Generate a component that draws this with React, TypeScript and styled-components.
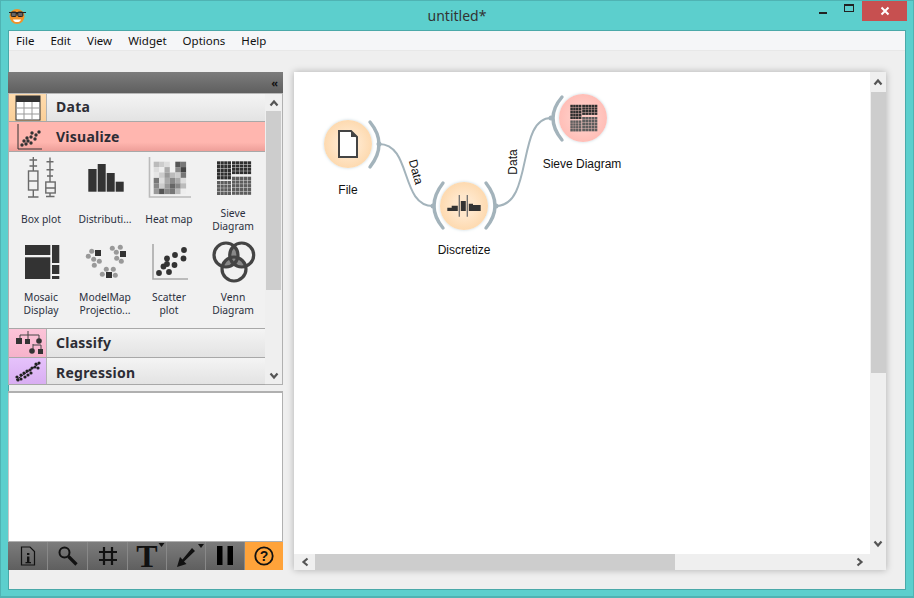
import React from 'react'
import styled, { createGlobalStyle } from 'styled-components'

const GlobalStyle = createGlobalStyle`
    html, body { margin: 0; padding: 0; background: #5ccfcd; }
    * { box-sizing: border-box; }
`

const Frame = styled.div`
    width: 914px;
    height: 598px;
    display: flex;
    flex-direction: column;
    background: #5ccfcd;
    border: 1px solid #4fb3b3;
    border-bottom-width: 2px;
    font-family: "Noto Sans", sans-serif;
    overflow: hidden;
`

const TitleBar = styled.div`
    height: 29px;
    flex: none;
    display: flex;
    align-items: flex-start;
    position: relative;
`

const Logo = styled.div`
    width: 18px;
    height: 18px;
    margin: 6px 0 0 7px;
`

const Title = styled.div`
    position: absolute;
    left: 0;
    right: 0;
    top: 5px;
    text-align: center;
    font-size: 14px;
    line-height: 20px;
    color: #333;
`

const WindowButtons = styled.div`
    margin-left: auto;
    margin-right: 6px;
    display: flex;
    align-items: flex-start;
`

const WinButton = styled.div<{ $width: number; $close?: boolean }>`
    width: ${p => p.$width}px;
    height: 20px;
    display: flex;
    align-items: center;
    justify-content: center;
    background: ${p => (p.$close ? '#c75050' : 'transparent')};
`

const Inner = styled.div`
    flex: 1;
    margin: 0 7px 6px 7px;
    border: 1px solid #4aa9a9;
    background: #efefef;
    display: flex;
    flex-direction: column;
    min-height: 0;
`

const MenuBar = styled.div`
    height: 20px;
    flex: none;
    display: flex;
    align-items: center;
    padding-left: 7px;
    gap: 16px;
    background: #f5f6f8;
    border-bottom: 1px solid #e8e8e8;
    font-size: 11.5px;
    color: #111;
`

const Body = styled.div`
    flex: 1;
    display: flex;
    gap: 11px;
    padding-top: 21px;
    padding-bottom: 19px;
    min-height: 0;
`

const Dock = styled.div`
    width: 275px;
    flex: none;
    display: flex;
    flex-direction: column;
    margin-left: -1px;
`

const DockHeader = styled.div`
    height: 21px;
    flex: none;
    display: flex;
    align-items: center;
    justify-content: flex-end;
    padding-right: 5px;
    background: linear-gradient(#7c7c7c, #5f5f5f);
    font-size: 11px;
    font-weight: 700;
    line-height: 1;
    color: #111;
`

const ToolBoxWrap = styled.div`
    height: 292px;
    flex: none;
    display: flex;
    background: #f1f1f1;
    border: 1px solid #b0b0b0;
    border-top: 1px solid #b8b8b8;
`

const ToolBox = styled.div`
    flex: 1;
    min-width: 0;
    display: flex;
    flex-direction: column;
`

const SideScroll = styled.div`
    width: 17px;
    flex: none;
    display: flex;
    flex-direction: column;
    align-items: center;
    background: #efefef;
`

const ArrowCell = styled.div<{ $h: number }>`
    height: ${p => p.$h}px;
    flex: none;
    display: flex;
    align-items: center;
    justify-content: center;
`

const Thumb = styled.div<{ $h: number }>`
    width: 15px;
    height: ${p => p.$h}px;
    flex: none;
    background: #cdcdcd;
`

const Spring = styled.div`
    flex: 1;
`

const Section = styled.div<{ $h: number; $bg?: string }>`
    height: ${p => p.$h}px;
    flex: none;
    display: flex;
    align-items: stretch;
    background: ${p => p.$bg || 'linear-gradient(#f4f4f4, #e3e3e3)'};
    border-bottom: 1px solid #a8a8a8;
`

const SectionTile = styled.div<{ $bg: string; $line?: boolean }>`
    width: 38px;
    flex: none;
    display: flex;
    align-items: center;
    justify-content: center;
    background: ${p => p.$bg};
    border-right: ${p => (p.$line ? '1px solid #b4b4b4' : '1px solid transparent')};
`

const SectionName = styled.div<{ $up?: number; $down?: number }>`
    padding-left: 9px;
    padding-bottom: ${p => p.$up || 0}px;
    padding-top: ${p => p.$down || 0}px;
    display: flex;
    align-items: center;
    font-size: 14px;
    font-weight: 700;
    color: #2d2d35;
    letter-spacing: 0.25px;
`

const WidgetGrid = styled.div`
    height: 177px;
    flex: none;
    display: grid;
    grid-template-columns: repeat(4, 64px);
    grid-auto-rows: 84px;
    padding-top: 2px;
    border-bottom: 1px solid #a8a8a8;
`

const Widget = styled.div`
    display: flex;
    flex-direction: column;
    align-items: center;
`

const WidgetIcon = styled.svg`
    width: 48px;
    height: 48px;
    flex: none;
    display: block;
`

const WidgetName = styled.div`
    height: 27px;
    margin-top: 4px;
    width: 50px;
    display: flex;
    align-items: center;
    justify-content: center;
    text-align: center;
    font-size: 10.3px;
    line-height: 13px;
    color: #2b3040;
`

const Splitter = styled.div`
    height: 8px;
    flex: none;
    border-bottom: 2px solid #b0b0b0;
`

const InfoPanel = styled.div`
    flex: 1;
    background: #fff;
    border: 1px solid #b0b0b0;
    border-top: none;
    border-left: 1px solid #c8c8c8;
`

const ToolBar = styled.div`
    height: 28px;
    flex: none;
    display: grid;
    grid-template-columns: 40px 40px 40px 39px 39px 39px 38px;
    background: linear-gradient(#7c7c7c, #5f5f5f);
`

const ToolButton = styled.div<{ $active?: boolean }>`
    display: flex;
    align-items: center;
    justify-content: center;
    border-right: 1px solid #888;
    background: ${p => (p.$active ? '#ffa33a' : 'transparent')};
    &:last-child { border-right: none; }
`

const CanvasPanel = styled.div`
    width: 592px;
    flex: none;
    display: grid;
    grid-template-columns: 1fr 16px;
    grid-template-rows: 1fr 16px;
    background: #efefef;
    box-shadow: 0 0 7px rgba(0, 0, 0, 0.28);
`

const Canvas = styled.div`
    position: relative;
    background: #fff;
    overflow: hidden;
`

const VScroll = styled.div`
    display: flex;
    flex-direction: column;
    align-items: center;
`

const HScroll = styled.div`
    display: flex;
    align-items: center;
`

const HArrowCell = styled.div`
    width: 21px;
    flex: none;
    display: flex;
    align-items: center;
    justify-content: center;
`

const HThumb = styled.div`
    width: 360px;
    height: 16px;
    flex: none;
    background: #cdcdcd;
`

const WireLayer = styled.svg`
    position: absolute;
    left: 0;
    top: 0;
`

const Node = styled.div<{ $x: number; $y: number; $tint: string; $edge: string }>`
    position: absolute;
    left: ${p => p.$x - 24}px;
    top: ${p => p.$y - 24}px;
    width: 48px;
    height: 48px;
    border-radius: 50%;
    display: flex;
    align-items: center;
    justify-content: center;
    background: radial-gradient(circle, ${p => p.$tint} 30%, ${p => p.$edge} 100%);
    box-shadow: 0 0 3px rgba(170, 195, 205, 0.7);
`

const NodeLabel = styled.div<{ $x: number; $y: number }>`
    position: absolute;
    left: ${p => p.$x - 60}px;
    top: ${p => p.$y - 8}px;
    width: 120px;
    text-align: center;
    font-family: "Liberation Sans", sans-serif;
    font-size: 12px;
    line-height: 16px;
    color: #111;
`

const LinkLabel = styled(NodeLabel)<{ $angle: number }>`
    transform: rotate(${p => p.$angle}deg);
`

const Chevron = ({ dir }: { dir: 'up' | 'down' | 'left' | 'right' }) => {
    const angle = { up: 0, right: 90, down: 180, left: 270 }[dir]
    return (
        <svg width="10" height="10" viewBox="0 0 10 10" style={{ transform: `rotate(${angle}deg)` }}>
            <path d="M1.5 7.5 5 3.5l3.5 4" fill="none" stroke="#555" strokeWidth="2.2" />
        </svg>
    )
}

const BoxPlotIcon = () => (
    <WidgetIcon viewBox="0 0 48 48">
        <g fill="none" stroke="#6a6a6a" strokeWidth="1.4">
            <path d="M16.3 3v40M12.5 6h7.6M11 43h10.5M12.5 12h7.6" />
            <rect x="11.5" y="17" width="9.4" height="19" fill="#f1f1f1" />
            <path d="M11.5 27h9.4" />
            <path d="M33 3.5v25M29.5 7.7h7M29.5 15.7h7M30 22h6" />
            <rect x="28.8" y="28" width="9.4" height="11" fill="#f1f1f1" />
            <path d="M28.8 34h9.4M33 39v3M29 42.5h8.5" />
        </g>
    </WidgetIcon>
)

const DistributionIcon = () => (
    <WidgetIcon viewBox="0 0 48 48">
        <g fill="#333">
            <rect x="7.3" y="15" width="8.3" height="22.7" />
            <rect x="16.7" y="10" width="8" height="27.7" />
            <rect x="25.7" y="19" width="8" height="18.7" />
            <rect x="34.7" y="27.7" width="8" height="10" />
        </g>
    </WidgetIcon>
)

const heatCells = [
    ['#bbb', '#ccc', '#ddd', '#f1f1f1', '#555', '#777'],
    ['#ddd', '#eee', '#aaa', '#f1f1f1', '#888', '#444'],
    ['#e6e6e6', '#ccc', '#999', '#bbb', '#ccc', '#777'],
    ['#777', '#ddd', '#aaa', '#888', '#aaa', '#ddd'],
    ['#888', '#ccc', '#999', '#666', '#888', '#bbb'],
    ['#999', '#555', '#888', '#777', '#bbb', '#eee'],
]

const HeatMapIcon = () => (
    <WidgetIcon viewBox="0 0 48 48">
        <path d="M4.5 3v40h41.5" fill="none" stroke="#bbb" strokeWidth="1.6" />
        {heatCells.map((row, r) =>
            row.map((c, i) => <rect key={`${r}-${i}`} x={8.7 + i * 5.4} y={7.7 + r * 5.4} width="5.4" height="5.4" fill={c} />)
        )}
    </WidgetIcon>
)

const cellBlock = (x: number, y: number, cols: number, rows: number, w: number, h: number, fill: string) => {
    const out = []
    for (let r = 0; r < rows; r++) {
        for (let c = 0; c < cols; c++) {
            out.push(<rect key={`${x}-${y}-${r}-${c}`} x={x + c * w} y={y + r * h} width={w - 0.4} height={h - 0.4} fill={fill} />)
        }
    }
    return out
}

const SieveIcon = ({ size = 48 }: { size?: number }) => (
    <svg width={size} height={size} viewBox="0 0 48 48" style={{ display: 'block' }}>
        {cellBlock(8, 7.3, 4, 5, 3.6, 3.7, '#2e2e2e')}
        {cellBlock(23, 7.3, 5, 4, 3.9, 3.3, '#2e2e2e')}
        {cellBlock(8, 27, 4, 4, 3.6, 3.6, '#5d5d5d')}
        {cellBlock(23, 22.7, 5, 5, 3.9, 3.7, '#5d5d5d')}
    </svg>
)

const MosaicIcon = () => (
    <WidgetIcon viewBox="0 0 48 48">
        <g fill="#333">
            <rect x="8" y="7" width="25.3" height="10" />
            <rect x="8" y="19.3" width="25.3" height="21.7" />
            <rect x="35" y="7" width="7.3" height="18" />
            <rect x="35" y="27" width="7.3" height="9" />
            <rect x="35" y="38" width="7.3" height="3" />
        </g>
    </WidgetIcon>
)

const modelDots = [
    [10.7, 13.3], [7.3, 18.3], [12.7, 21.3], [18.3, 23.3], [13.3, 27.3],
    [31.3, 10.3], [39.3, 9.3], [35.3, 14.3], [35.7, 20.3], [40.3, 23.3],
    [25.3, 31.3], [32.3, 31.3], [21.3, 36.3], [34.3, 37.3],
]

const ModelMapIcon = () => (
    <WidgetIcon viewBox="0 0 48 48">
        {modelDots.map(([x, y]) => <circle key={`${x}-${y}`} cx={x} cy={y} r="2.5" fill="#999" />)}
        <g fill="#333">
            <rect x="14" y="12" width="6" height="6" />
            <rect x="39" y="13" width="6" height="6" />
            <rect x="25" y="34" width="6" height="6" />
        </g>
    </WidgetIcon>
)

const ScatterIcon = () => (
    <WidgetIcon viewBox="0 0 48 48">
        <path d="M8 6v35h35" fill="none" stroke="#aaa" strokeWidth="1.6" />
        {[[14, 35], [24, 34], [18.5, 28.5], [22, 26], [29.5, 27], [22, 20.5], [30, 17], [38.5, 20.5], [39, 12]].map(([x, y]) => (
            <circle key={`${x}-${y}`} cx={x} cy={y} r="2.9" fill="#333" />
        ))}
    </WidgetIcon>
)

const VennIcon = () => (
    <WidgetIcon viewBox="0 0 48 48">
        <defs>
            <clipPath id="vennA"><circle cx="17" cy="17" r="12" /></clipPath>
            <clipPath id="vennB"><circle cx="32.7" cy="17" r="12" /></clipPath>
            <clipPath id="vennC"><circle cx="25" cy="31" r="12" /></clipPath>
        </defs>
        <g fill="#888">
            <circle cx="32.7" cy="17" r="12" clipPath="url(#vennA)" />
            <circle cx="25" cy="31" r="12" clipPath="url(#vennA)" />
            <circle cx="25" cy="31" r="12" clipPath="url(#vennB)" />
        </g>
        <g fill="none" stroke="#444" strokeWidth="3.2">
            <circle cx="17" cy="17" r="12" />
            <circle cx="32.7" cy="17" r="12" />
            <circle cx="25" cy="31" r="12" />
        </g>
    </WidgetIcon>
)

const TableTileIcon = () => (
    <svg width="26" height="26" viewBox="0 0 26 26">
        <rect x="1" y="1" width="24" height="24" fill="#fff" stroke="#333" />
        <rect x="1" y="1" width="24" height="6" fill="#333" />
        <path d="M9 7v18M17 7v18M1 13h24M1 19h24" stroke="#999" fill="none" />
    </svg>
)

const ScatterTileIcon = () => (
    <svg width="28" height="28" viewBox="0 0 28 28">
        <path d="M4 1v25h24" fill="none" stroke="#333" strokeWidth="1" />
        {[[8, 22], [12, 21], [10, 18], [14, 18], [17, 20], [13, 15], [17, 14], [21, 16], [18, 10], [22, 12], [25, 9]].map(([x, y]) => (
            <circle key={`${x}-${y}`} cx={x} cy={y} r="1.7" fill="#333" />
        ))}
    </svg>
)

const TreeTileIcon = () => (
    <svg width="30" height="26" viewBox="0 0 30 26">
        <path d="M15 1v4M7 5h19M7 5v4M15 5v4M26 5v4M20 14v5M20 15h8v4" fill="none" stroke="#444" strokeWidth="1" />
        <g fill="#333">
            <rect x="3" y="8" width="6" height="6" />
            <rect x="12" y="9" width="5" height="5" />
            <circle cx="26" cy="11" r="2.8" />
            <circle cx="19" cy="21" r="2.8" />
            <rect x="25" y="19" width="5" height="5" />
        </g>
    </svg>
)

const RegressionTileIcon = () => (
    <svg width="26" height="22" viewBox="0 0 26 22">
        <path d="M1 20 25 3" stroke="#222" strokeWidth="1" />
        {[[2, 17], [3, 20], [6, 15], [6, 19], [9, 13], [10, 17], [12, 11], [13, 15], [15, 10], [17, 8], [16, 13], [20, 7], [21, 4], [23, 8], [24, 3]].map(([x, y]) => (
            <circle key={`${x}-${y}`} cx={x} cy={y} r="1.6" fill="#222" />
        ))}
    </svg>
)

const InfoTool = () => (
    <svg width="18" height="20" viewBox="0 0 18 20">
        <path d="M2.5 1h8.5l4.5 4.5V19h-13z" fill="none" stroke="#111" strokeWidth="1.2" />
        <rect x="8" y="7" width="2.4" height="2" fill="#111" />
        <rect x="8" y="10.5" width="2.4" height="5.5" fill="#111" />
        <rect x="6.5" y="16" width="5.5" height="1.3" fill="#111" />
    </svg>
)

const SearchTool = () => (
    <svg width="22" height="20" viewBox="0 0 22 20">
        <circle cx="7.5" cy="6.5" r="5" fill="none" stroke="#111" strokeWidth="2" />
        <path d="m11.5 10.5 8 8" stroke="#111" strokeWidth="3.2" />
    </svg>
)

const GridTool = () => (
    <svg width="20" height="20" viewBox="0 0 20 20">
        <path d="M6 1v18M14 1v18M1 6h18M1 14h18" stroke="#111" strokeWidth="2.2" />
    </svg>
)

const TextTool = () => (
    <svg width="38" height="42" viewBox="0 0 38 42" style={{ margin: '-7px 0' }}>
        <text x="19" y="32" textAnchor="middle" fontFamily="Liberation Serif, serif" fontWeight="700" fontSize="32" fill="#111">T</text>
        <path d="m30.5 8 6 0-3 4z" fill="#111" />
    </svg>
)

const ArrowTool = () => (
    <svg width="36" height="26" viewBox="0 0 36 26">
        <path d="M9 24 12 14l2.500 2.500L24 5l3 3-11 10.500 2.500 2.500z" fill="#111" />
        <path d="m30 1 6 0-3 4z" fill="#111" />
    </svg>
)

const PauseTool = () => (
    <svg width="16" height="20" viewBox="0 0 16 20">
        <rect x="0" y="0" width="5.5" height="19" fill="#000" />
        <rect x="10.5" y="0" width="5.5" height="19" fill="#000" />
    </svg>
)

const HelpTool = () => (
    <svg width="22" height="22" viewBox="0 0 22 22">
        <circle cx="11" cy="11" r="8.7" fill="none" stroke="#111" strokeWidth="1.8" />
        <text x="11" y="16" textAnchor="middle" fontFamily="Liberation Sans, sans-serif" fontWeight="700" fontSize="14" fill="#111">?</text>
    </svg>
)

const widgets: { name: string; icon: React.ReactNode }[] = [
    { name: 'Box plot', icon: <BoxPlotIcon /> },
    { name: 'Distributi...', icon: <DistributionIcon /> },
    { name: 'Heat map', icon: <HeatMapIcon /> },
    { name: 'Sieve Diagram', icon: <SieveIcon /> },
    { name: 'Mosaic Display', icon: <MosaicIcon /> },
    { name: 'ModelMap Projectio...', icon: <ModelMapIcon /> },
    { name: 'Scatter plot', icon: <ScatterIcon /> },
    { name: 'Venn Diagram', icon: <VennIcon /> },
]

const menus = ['File', 'Edit', 'View', 'Widget', 'Options', 'Help']

const PEACH = '#ffe7cb'
const PEACH_EDGE = '#fcd09c'

const App: React.FunctionComponent = () => {
    return (
        <Frame>
            <GlobalStyle />
            <TitleBar>
                <Logo>
                    <svg width="18" height="18" viewBox="0 0 18 18">
                        <circle cx="9" cy="9.5" r="7.5" fill="#f0932b" />
                        <path d="M5 12.500h8c-.5 2-2 2.500-4 2.500s-3.500-.5-4-2.500z" fill="#fff" />
                        <rect x="3.200" y="5" width="5" height="4.500" rx="1" fill="#666" stroke="#222" />
                        <rect x="9.800" y="5" width="5" height="4.500" rx="1" fill="#666" stroke="#222" />
                        <path d="M1 5.500h17M8 6.500h2" stroke="#222" strokeWidth="1" />
                    </svg>
                </Logo>
                <Title>untitled*</Title>
                <WindowButtons>
                    <WinButton $width={26}>
                        <svg width="10" height="12" viewBox="0 0 10 12"><rect x="1" y="7" width="8" height="2" fill="#222" /></svg>
                    </WinButton>
                    <WinButton $width={26}>
                        <svg width="12" height="14" viewBox="0 0 12 14"><rect x="1.500" y="0.500" width="9" height="7" fill="none" stroke="#222" /><rect x="1" y="0" width="10" height="2" fill="#222" /></svg>
                    </WinButton>
                    <WinButton $width={45} $close>
                        <svg width="10" height="10" viewBox="0 0 10 10"><path d="m1.500 1.500 7 7m0-7-7 7" stroke="#fff" strokeWidth="2" /></svg>
                    </WinButton>
                </WindowButtons>
            </TitleBar>
            <Inner>
                <MenuBar>
                    {menus.map(m => <span key={m}>{m}</span>)}
                </MenuBar>
                <Body>
                    <Dock>
                        <DockHeader>«</DockHeader>
                        <ToolBoxWrap>
                            <ToolBox>
                                <Section $h={28}>
                                    <SectionTile $bg="linear-gradient(#ffdcae, #fbcf98)" $line><TableTileIcon /></SectionTile>
                                    <SectionName $up={2}>Data</SectionName>
                                </Section>
                                <Section $h={30} $bg="linear-gradient(#ffb6af 70%, #ee9f99)">
                                    <SectionTile $bg="transparent"><ScatterTileIcon /></SectionTile>
                                    <SectionName>Visualize</SectionName>
                                </Section>
                                <WidgetGrid>
                                    {widgets.map(w => (
                                        <Widget key={w.name}>
                                            {w.icon}
                                            <WidgetName>{w.name}</WidgetName>
                                        </Widget>
                                    ))}
                                </WidgetGrid>
                                <Section $h={29}>
                                    <SectionTile $bg="linear-gradient(#fcc4d8, #f6b2ca)" $line><TreeTileIcon /></SectionTile>
                                    <SectionName $up={2}>Classify</SectionName>
                                </Section>
                                <Section $h={27}>
                                    <SectionTile $bg="linear-gradient(#e6c2fb, #d9aef2)" $line><RegressionTileIcon /></SectionTile>
                                    <SectionName $down={2}>Regression</SectionName>
                                </Section>
                            </ToolBox>
                            <SideScroll>
                                <ArrowCell $h={17}><Chevron dir="up" /></ArrowCell>
                                <Thumb $h={179} />
                                <Spring />
                                <ArrowCell $h={17}><Chevron dir="down" /></ArrowCell>
                            </SideScroll>
                        </ToolBoxWrap>
                        <Splitter />
                        <InfoPanel />
                        <ToolBar>
                            <ToolButton><InfoTool /></ToolButton>
                            <ToolButton><SearchTool /></ToolButton>
                            <ToolButton><GridTool /></ToolButton>
                            <ToolButton><TextTool /></ToolButton>
                            <ToolButton><ArrowTool /></ToolButton>
                            <ToolButton><PauseTool /></ToolButton>
                            <ToolButton $active><HelpTool /></ToolButton>
                        </ToolBar>
                    </Dock>
                    <CanvasPanel>
                        <Canvas>
                            <WireLayer width="576" height="482">
                                <g fill="none" stroke="#a3b3bb">
                                    <path d="M85 72C118 72 106 134 139 134" strokeWidth="2" />
                                    <path d="M202 134C240 134 222 46 257 46" strokeWidth="2" />
                                    <g strokeWidth="3.400" strokeLinecap="round">
                                        <path d="M76 50Q94 72 76 95" />
                                        <path d="M149 111Q131 134 149 156" />
                                        <path d="M192 111Q210 134 192 156" />
                                        <path d="M268 25Q250 46 268 68" />
                                    </g>
                                </g>
                                <g fill="#a3b3bb">
                                    <circle cx="85" cy="72" r="2.500" />
                                    <circle cx="139" cy="134" r="2.500" />
                                    <circle cx="202" cy="134" r="2.500" />
                                    <circle cx="257" cy="46" r="2.500" />
                                </g>
                            </WireLayer>
                            <Node $x={54} $y={72} $tint={PEACH} $edge={PEACH_EDGE}>
                                <svg width="24" height="30" viewBox="0 0 24 30">
                                    <path d="M3 2h12l6 6v20H3z" fill="#fff" stroke="#444" strokeWidth="2" />
                                    <path d="M15 2l6 6h-6z" fill="#444" />
                                </svg>
                            </Node>
                            <NodeLabel $x={54} $y={118}>File</NodeLabel>
                            <Node $x={170} $y={134} $tint={PEACH} $edge={PEACH_EDGE}>
                                <svg width="36" height="28" viewBox="0 0 36 28">
                                    <path d="M1.300 19v-3.300h4.400v-2h8.300V9h6.700v2.700H27V13h7.700v6z" fill="#333" />
                                    <path d="M13.300 3v21.700M21.300 3v21.700" stroke="#ffe7cb" strokeWidth="3" />
                                    <path d="M13.300 3v21.700M21.300 3v21.700" stroke="#6f6f6f" strokeWidth="1.300" />
                                </svg>
                            </Node>
                            <NodeLabel $x={170} $y={178}>Discretize</NodeLabel>
                            <Node $x={289} $y={46} $tint="#ffcdc7" $edge="#ffb3ab">
                                <SieveIcon size={38} />
                            </Node>
                            <NodeLabel $x={288} $y={92}>Sieve Diagram</NodeLabel>
                            <LinkLabel $x={122} $y={100} $angle={75}>Data</LinkLabel>
                            <LinkLabel $x={219} $y={90} $angle={-90}>Data</LinkLabel>
                        </Canvas>
                        <VScroll>
                            <ArrowCell $h={20}><Chevron dir="up" /></ArrowCell>
                            <Thumb $h={281} />
                            <Spring />
                            <ArrowCell $h={20}><Chevron dir="down" /></ArrowCell>
                        </VScroll>
                        <HScroll>
                            <HArrowCell><Chevron dir="left" /></HArrowCell>
                            <HThumb />
                            <Spring />
                            <HArrowCell><Chevron dir="right" /></HArrowCell>
                        </HScroll>
                    </CanvasPanel>
                </Body>
            </Inner>
        </Frame>
    )
}

export default App
